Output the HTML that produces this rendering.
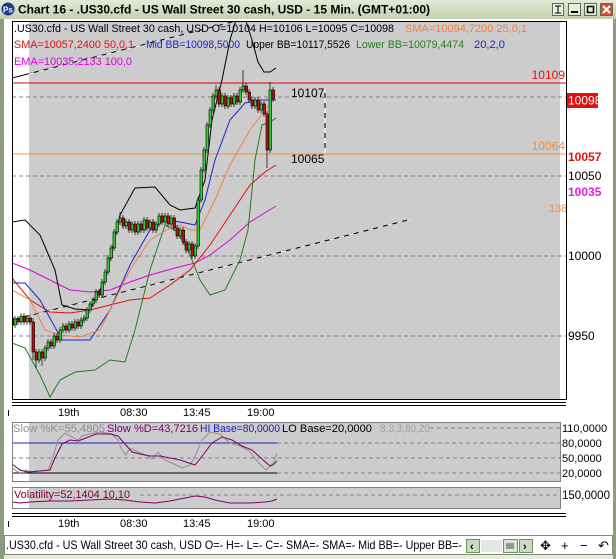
<!DOCTYPE html>
<html><head><meta charset="utf-8"><style>
html,body{margin:0;padding:0;width:616px;height:559px;overflow:hidden;background:#fff}
svg{display:block}
text{font-family:"Liberation Sans",sans-serif;font-size:11px}
</style></head><body>
<svg width="616" height="559" viewBox="0 0 616 559" xmlns="http://www.w3.org/2000/svg">
<defs>
<linearGradient id="tb" x1="0" y1="0" x2="0" y2="1"><stop offset="0" stop-color="#e4ead8"/><stop offset="1" stop-color="#c4d0b0"/></linearGradient>
<clipPath id="cp"><rect x="12" y="21" width="554" height="378"/></clipPath>
</defs>
<rect x="0" y="0" width="616" height="559" fill="#8c9c80"/>
<rect x="0" y="0" width="616" height="19" fill="url(#tb)"/>
<rect x="4" y="19" width="609" height="537" fill="#fff"/>
<rect x="4" y="555" width="609" height="4" fill="#e8ece0"/>
<circle cx="8" cy="9" r="6.5" fill="#1c3c8c"/><text x="3" y="12.5" fill="#fff" style="font-size:8px;font-weight:bold">Ps</text>
<text x="18" y="13.5" style="font-size:12px;font-weight:bold" fill="#000">Chart 16 - .US30.cfd - US Wall Street 30 cash, USD - 15 Min. (GMT+01:00)</text>
<g stroke="#5c6c50" stroke-width="1">
<rect x="552.5" y="3.5" width="11" height="12" fill="#e8ecdc"/>
<rect x="568.5" y="3.5" width="12" height="12" fill="#e8ecdc"/>
<rect x="584.5" y="3.5" width="12" height="12" fill="#e8ecdc"/>
<rect x="600.5" y="3.5" width="12" height="12" fill="#e04830"/>
</g>
<path d="M555 6h6M555 13h6M558 6v7" stroke="#000"/>
<rect x="571" y="11" width="7" height="2" fill="#000"/>
<rect x="587.5" y="6.5" width="6" height="6" fill="none" stroke="#000" stroke-width="1.5"/>
<path d="M603 6l7 7M610 6l-7 7" stroke="#fff" stroke-width="2"/>

<rect x="12" y="21" width="554" height="378" fill="#fff"/>
<rect x="29" y="21" width="531" height="378" fill="#cccccc"/>
<g clip-path="url(#cp)">
<g stroke="#808080" stroke-dasharray="4,3" stroke-width="1">
<line x1="12" y1="97" x2="566" y2="97"/><line x1="12" y1="176" x2="566" y2="176"/>
<line x1="12" y1="256" x2="566" y2="256"/><line x1="12" y1="336" x2="566" y2="336"/>
</g>
<line x1="12" y1="83" x2="566" y2="83" stroke="#e00000"/>
<line x1="12" y1="154" x2="566" y2="154" stroke="#f09040"/>
<line x1="12" y1="320" x2="412" y2="219" stroke="#000"/>
<line x1="29" y1="316" x2="412" y2="219" stroke="#fff" stroke-dasharray="5,5"/>
<line x1="12" y1="78" x2="236" y2="21" stroke="#000"/>
<line x1="29" y1="74" x2="236" y2="21" stroke="#fff" stroke-dasharray="5,5"/>
<line x1="325" y1="88" x2="325" y2="153" stroke="#000"/>
<line x1="325" y1="88" x2="325" y2="153" stroke="#fff" stroke-dasharray="5,5"/>
<g fill="none" stroke-width="1">
<polyline stroke="#e000e0" points="12,263 30,270 50,280 70,290 90,292 110,290 130,282 150,275 175,268 195,263 210,255 230,240 250,222 276,206"/>
<polyline stroke="#e01010" points="12,278 30,300 50,312 70,313 90,310 110,305 130,300 150,298 170,285 190,270 210,245 230,215 250,185 265,172 276,165"/>
<polyline stroke="#000" points="12,222 25,220 40,235 55,270 62,305 75,309 90,310 105,280 120,215 135,188 155,187 170,205 180,210 195,208 205,180 212,120 222,80 230,40 236,20 245,18 252,40 258,62 264,72 270,72 276,68"/>
<polyline stroke="#208020" points="12,343 25,348 40,375 50,397 60,380 75,372 95,370 110,360 125,362 135,330 150,270 165,225 178,232 190,255 200,280 210,295 225,290 240,260 248,230 255,160 262,125 270,122 276,118"/>
<polyline stroke="#2020d0" points="12,283 25,283 40,300 62,340 90,340 110,310 130,265 150,230 165,220 180,222 195,225 205,200 215,160 230,120 245,103 260,100 276,100"/>
<polyline stroke="#f08048" points="12,290 30,300 45,330 60,335 80,337 100,330 115,300 130,270 150,240 170,228 180,225 190,230 200,230 215,200 230,165 250,130 265,110 276,95"/>
</g>
<g stroke="#000" stroke-width="0.7">
<path d="M12 315V329M15 316V328M18 316V325M21 313V325M24 313V325M27 315V325M30 315V325M33 318V360M36 349V368M39 349V363M42 349V366M45 345V361M48 339V351M51 339V349M54 333V349M57 333V343M60 327V343M63 323V333M66 323V333M69 321V333M72 321V331M75 319V331M78 319V329M81 317V329M84 315V323M87 307V321M90 301V313M93 297V307M96 289V303M99 289V298M102 279V298M105 269V285M108 255V275M111 245V261M114 229V251M117 219V235M120 212V225M123 215V229M126 219V229M129 219V233M132 221V233M135 221V235M138 221V235M141 221V233M144 217V233M147 217V231M150 219V231M153 219V233M156 221V233M159 213V227M162 213V225M165 213V225M168 213V227M171 215V227M174 215V231M177 225V239M180 227V239M183 227V245M186 239V253M189 241V253M192 241V259M195 243V259M198 197V249M201 167V203M204 147V173M207 122V153M210 107V128M213 93V113M216 85V99M219 87V107M222 93V107M225 93V109M228 95V109M231 95V107M234 93V107M237 93V105M240 87V105M243 70V93M246 83V95M249 89V103M252 97V109M255 97V109M258 97V113M261 101V113M264 101V117M267 111V168M270 82V153M273 87V102"/>
</g>
<g stroke="#000" stroke-width="0.6" fill="#c01010">
<rect x="11" y="318" width="2.6" height="7"/><rect x="17" y="319" width="2.6" height="3"/><rect x="23" y="316" width="2.6" height="6"/><rect x="29" y="318" width="2.6" height="4"/><rect x="32" y="322" width="2.6" height="30"/><rect x="35" y="352" width="2.6" height="8"/><rect x="41" y="352" width="2.6" height="6"/><rect x="50" y="342" width="2.6" height="4"/><rect x="56" y="336" width="2.6" height="4"/><rect x="65" y="326" width="2.6" height="4"/><rect x="71" y="324" width="2.6" height="4"/><rect x="77" y="322" width="2.6" height="4"/><rect x="98" y="292" width="2.6" height="3"/><rect x="122" y="218" width="2.6" height="8"/><rect x="128" y="222" width="2.6" height="8"/><rect x="134" y="224" width="2.6" height="8"/><rect x="140" y="224" width="2.6" height="6"/><rect x="146" y="220" width="2.6" height="8"/><rect x="152" y="222" width="2.6" height="8"/><rect x="161" y="216" width="2.6" height="6"/><rect x="167" y="216" width="2.6" height="8"/><rect x="173" y="218" width="2.6" height="10"/><rect x="176" y="228" width="2.6" height="8"/><rect x="182" y="230" width="2.6" height="12"/><rect x="185" y="242" width="2.6" height="8"/><rect x="191" y="244" width="2.6" height="12"/><rect x="218" y="90" width="2.6" height="14"/><rect x="224" y="96" width="2.6" height="10"/><rect x="230" y="98" width="2.6" height="6"/><rect x="236" y="96" width="2.6" height="6"/><rect x="245" y="86" width="2.6" height="6"/><rect x="248" y="92" width="2.6" height="8"/><rect x="251" y="100" width="2.6" height="6"/><rect x="257" y="100" width="2.6" height="10"/><rect x="263" y="104" width="2.6" height="10"/><rect x="266" y="114" width="2.6" height="36"/><rect x="272" y="90" width="2.6" height="9"/>
</g>
<g stroke="#000" stroke-width="0.6" fill="#30d030">
<rect x="14" y="319" width="2.6" height="6"/><rect x="20" y="316" width="2.6" height="6"/><rect x="26" y="318" width="2.6" height="4"/><rect x="38" y="352" width="2.6" height="8"/><rect x="44" y="348" width="2.6" height="10"/><rect x="47" y="342" width="2.6" height="6"/><rect x="53" y="336" width="2.6" height="10"/><rect x="59" y="330" width="2.6" height="10"/><rect x="62" y="326" width="2.6" height="4"/><rect x="68" y="324" width="2.6" height="6"/><rect x="74" y="322" width="2.6" height="6"/><rect x="80" y="320" width="2.6" height="6"/><rect x="83" y="318" width="2.6" height="2"/><rect x="86" y="310" width="2.6" height="8"/><rect x="89" y="304" width="2.6" height="6"/><rect x="92" y="300" width="2.6" height="4"/><rect x="95" y="292" width="2.6" height="8"/><rect x="101" y="282" width="2.6" height="13"/><rect x="104" y="272" width="2.6" height="10"/><rect x="107" y="258" width="2.6" height="14"/><rect x="110" y="248" width="2.6" height="10"/><rect x="113" y="232" width="2.6" height="16"/><rect x="116" y="222" width="2.6" height="10"/><rect x="119" y="218" width="2.6" height="4"/><rect x="125" y="222" width="2.6" height="4"/><rect x="131" y="224" width="2.6" height="6"/><rect x="137" y="224" width="2.6" height="8"/><rect x="143" y="220" width="2.6" height="10"/><rect x="149" y="222" width="2.6" height="6"/><rect x="155" y="224" width="2.6" height="6"/><rect x="158" y="216" width="2.6" height="8"/><rect x="164" y="216" width="2.6" height="6"/><rect x="170" y="218" width="2.6" height="6"/><rect x="179" y="230" width="2.6" height="6"/><rect x="188" y="244" width="2.6" height="6"/><rect x="194" y="246" width="2.6" height="10"/><rect x="197" y="200" width="2.6" height="46"/><rect x="200" y="170" width="2.6" height="30"/><rect x="203" y="150" width="2.6" height="20"/><rect x="206" y="125" width="2.6" height="25"/><rect x="209" y="110" width="2.6" height="15"/><rect x="212" y="96" width="2.6" height="14"/><rect x="215" y="90" width="2.6" height="6"/><rect x="221" y="96" width="2.6" height="8"/><rect x="227" y="98" width="2.6" height="8"/><rect x="233" y="96" width="2.6" height="8"/><rect x="239" y="90" width="2.6" height="12"/><rect x="242" y="86" width="2.6" height="4"/><rect x="254" y="100" width="2.6" height="6"/><rect x="260" y="104" width="2.6" height="6"/><rect x="269" y="90" width="2.6" height="60"/>
</g>
<text x="291" y="97" fill="#000" style="font-size:12px">10107</text>
<text x="291" y="163" fill="#000" style="font-size:12px">10065</text>
<text x="565" y="79" fill="#e01010" text-anchor="end" style="font-size:12px">10109</text>
<text x="565" y="150" fill="#f09040" text-anchor="end" style="font-size:12px">10064</text>
<text x="549" y="212" fill="#f09040" style="font-size:11px">138 E</text>
<text x="14" y="32" fill="#000" textLength="380" lengthAdjust="spacingAndGlyphs">.US30.cfd - US Wall Street 30 cash, USD O=10104 H=10106 L=10095 C=10098</text>
<text x="405" y="32" fill="#f08048" textLength="122" lengthAdjust="spacingAndGlyphs">SMA=10094,7200  25,0,1</text>
<text x="14" y="48" fill="#e01010" textLength="120" lengthAdjust="spacingAndGlyphs">SMA=10057,2400  50,0,1</text>
<text x="146" y="48" fill="#2020d0" textLength="94" lengthAdjust="spacingAndGlyphs">Mid BB=10098,5000</text>
<text x="246" y="48" fill="#000" textLength="104" lengthAdjust="spacingAndGlyphs">Upper BB=10117,5526</text>
<text x="356" y="48" fill="#208020" textLength="108" lengthAdjust="spacingAndGlyphs">Lower BB=10079,4474</text>
<text x="474" y="48" fill="#2020d0" textLength="31" lengthAdjust="spacingAndGlyphs">20,2,0</text>
<text x="14" y="65" fill="#e000e0" textLength="118" lengthAdjust="spacingAndGlyphs">EMA=10035,2133  100,0</text>
</g>
<rect x="12.5" y="21.5" width="554" height="378" fill="none" stroke="#000"/>
<rect x="567" y="93" width="31" height="15" fill="#e01010"/>
<text x="568" y="104.5" fill="#fff" style="font-size:12px">10098</text>
<text x="568" y="161" fill="#e01010" style="font-size:12px;font-weight:bold">10057</text>
<text x="568" y="180" fill="#000" style="font-size:12px">10050</text>
<text x="568" y="196" fill="#e020e0" style="font-size:12px;font-weight:bold">10035</text>
<text x="568" y="260" fill="#000" style="font-size:12px">10000</text>
<text x="568" y="340" fill="#000" style="font-size:12px">9950</text>
<path d="M12 402.5H566M12 405.5H566" stroke="#000"/>
<g fill="#000" style="font-size:12px"><text x="7" y="416">ı</text><text x="58" y="416">19th</text><text x="120" y="416">08:30</text><text x="183" y="416">13:45</text><text x="247" y="416">19:00</text></g>
<rect x="12" y="422" width="548" height="59" fill="#fff"/>
<rect x="29" y="422" width="531" height="59" fill="#cccccc"/>
<g stroke="#808080" stroke-dasharray="4,3"><line x1="277" y1="443" x2="560" y2="443"/><line x1="12" y1="458" x2="560" y2="458"/><line x1="277" y1="473" x2="560" y2="473"/><line x1="430" y1="428" x2="560" y2="428"/></g>
<line x1="12" y1="443" x2="277" y2="443" stroke="#2020c0"/>
<line x1="12" y1="473" x2="277" y2="473" stroke="#000"/>
<polyline fill="none" stroke="#909090" points="12,468 18,472 22,474 26,470 30,472 40,471 48,470 52,460 58,440 65,433 72,437 78,440 82,436 90,434 100,432 112,434 118,440 122,450 126,455 130,448 138,452 146,455 152,459 158,452 165,460 172,463 182,468 190,465 196,454 202,440 210,432 220,434 230,443 240,446 250,452 258,462 266,470 270,466 274,462 277,453"/>
<polyline fill="none" stroke="#800060" points="12,464 20,470 28,472 40,471 50,470 55,458 62,444 70,440 78,441 86,438 96,434 110,434 118,436 125,444 132,452 140,454 150,456 160,456 170,458 180,460 195,465 203,455 212,443 222,437 232,440 242,446 252,450 262,459 270,466 273,465 277,461"/>
<rect x="12.5" y="422.5" width="548" height="59" fill="none" stroke="#808080"/>
<text x="13" y="432" fill="#909090" textLength="92" lengthAdjust="spacingAndGlyphs">Slow %K=55,4805</text>
<text x="107" y="432" fill="#800070" textLength="91" lengthAdjust="spacingAndGlyphs">Slow %D=43,7216</text>
<text x="200" y="432" fill="#2020c0" textLength="80" lengthAdjust="spacingAndGlyphs">HI Base=80,0000</text>
<text x="282" y="432" fill="#000" textLength="90" lengthAdjust="spacingAndGlyphs">LO Base=20,0000</text>
<text x="380" y="432" fill="#a0a0a0" textLength="50" lengthAdjust="spacingAndGlyphs">8,3,3,80,20</text>
<g fill="#000" style="font-size:11.5px"><text x="562" y="432">110,0000</text><text x="562" y="447">80,0000</text><text x="562" y="462">50,0000</text><text x="562" y="477">20,0000</text></g>
<rect x="12" y="487" width="548" height="21" fill="#fff"/>
<rect x="29" y="487" width="531" height="21" fill="#cccccc"/>
<line x1="140" y1="495" x2="560" y2="495" stroke="#808080" stroke-dasharray="4,3"/>
<polyline fill="none" stroke="#800060" points="12,502 20,503 30,502 50,501 70,501 90,500 110,499 125,500 140,502 155,503 170,501 185,498 195,496 205,497 215,500 230,503 250,503 265,502 272,501 277,499"/>
<rect x="12.5" y="487.5" width="548" height="21" fill="none" stroke="#808080"/>
<text x="14" y="498" fill="#800040" textLength="116" lengthAdjust="spacingAndGlyphs">Volatility=52,1404  10,10</text>
<text x="562" y="499" fill="#000" style="font-size:11.5px">150,0000</text>
<path d="M12 513.5H566M12 516.5H566" stroke="#000"/>
<g fill="#000" style="font-size:12px"><text x="7" y="527">ı</text><text x="58" y="527">19th</text><text x="120" y="527">08:30</text><text x="183" y="527">13:45</text><text x="247" y="527">19:00</text></g>
<rect x="4.5" y="535.5" width="608" height="19" fill="#fff" stroke="#7c8c70"/>
<text x="6" y="549" fill="#000" style="font-size:12px" textLength="456" lengthAdjust="spacingAndGlyphs">.US30.cfd - US Wall Street 30 cash, USD O=- H=- L=- C=-  SMA=- SMA=- Mid BB=- Upper BB=-</text>
<rect x="466.5" y="539.5" width="13" height="13" fill="#c8dcc0" stroke="#709060"/>
<text x="470" y="550" style="font-size:11px;font-weight:bold">‹</text>
<rect x="481" y="540" width="21" height="12" fill="#e4e8e0"/>
<rect x="503.5" y="539.5" width="14" height="13" fill="#dce4d8" stroke="#709060"/>
<path d="M507 543v6M509 543v6M511 543v6M513 543v6" stroke="#405040"/>
<rect x="519.5" y="539.5" width="13" height="13" fill="#c8dcc0" stroke="#709060"/>
<text x="523" y="550" style="font-size:11px;font-weight:bold">›</text>
<text x="540" y="550" style="font-size:13px">✥</text>
<text x="561" y="550" style="font-size:13px">+</text>
<text x="580" y="550" style="font-size:13px">−</text>
<text x="598" y="550" style="font-size:13px">↶</text>
</svg>
</body></html>
